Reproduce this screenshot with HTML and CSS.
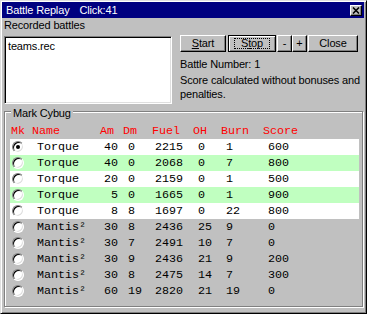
FILE: index.html
```html
<!DOCTYPE html>
<html>
<head>
  <meta charset="utf-8">
  <title>Battle Replay</title>
  <link rel="stylesheet" href="styles.css">
</head>
<body>
  <div class="window">
    <div class="titlebar">
      <span class="title">Battle Replay</span>
      <span class="title clicks">Click:41</span>
      <span class="close-btn">
        <svg width="8" height="7" viewBox="0 0 8 7">
          <path d="M1 0.5 L7 6.5 M7 0.5 L1 6.5" stroke="#000" stroke-width="1.6"/>
        </svg>
      </span>
    </div>

    <div class="content">
      <div class="caption">Recorded battles</div>

      <div class="top-pane">
        <div class="listbox">
          <div class="item">teams.rec</div>
        </div>
        <div class="controls">
          <div class="buttons">
            <button class="btn start"><u>S</u>tart</button>
            <button class="btn stop"><span class="focus">S<u>t</u>op</span></button>
            <button class="btn small">-</button>
            <button class="btn small">+</button>
            <button class="btn close">Close</button>
          </div>
          <p class="info">Battle Number: 1</p>
          <p class="info score-note">Score calculated without bonuses and penalties.</p>
        </div>
      </div>

      <div class="group">
        <span class="group-label">Mark Cybug</span>
        <div class="grid">
          <div class="row hdr">
            <span class="c-mk">Mk</span><span>Name</span><span>Am</span><span>Dm</span><span>Fuel</span><span>OH</span><span>Burn</span><span>Score</span>
          </div>
          <div class="row white">
            <span class="c-mk"><i class="radio checked"></i></span><span class="c-name">Torque</span><span class="c-am">40</span><span class="c-dm">0</span><span class="c-fuel">2215</span><span class="c-oh">0</span><span class="c-burn">1</span><span class="c-score">600</span>
          </div>
          <div class="row green">
            <span class="c-mk"><i class="radio"></i></span><span class="c-name">Torque</span><span class="c-am">40</span><span class="c-dm">0</span><span class="c-fuel">2068</span><span class="c-oh">0</span><span class="c-burn">7</span><span class="c-score">800</span>
          </div>
          <div class="row white">
            <span class="c-mk"><i class="radio"></i></span><span class="c-name">Torque</span><span class="c-am">20</span><span class="c-dm">0</span><span class="c-fuel">2159</span><span class="c-oh">0</span><span class="c-burn">1</span><span class="c-score">500</span>
          </div>
          <div class="row green">
            <span class="c-mk"><i class="radio"></i></span><span class="c-name">Torque</span><span class="c-am">5</span><span class="c-dm">0</span><span class="c-fuel">1665</span><span class="c-oh">0</span><span class="c-burn">1</span><span class="c-score">900</span>
          </div>
          <div class="row white">
            <span class="c-mk"><i class="radio"></i></span><span class="c-name">Torque</span><span class="c-am">8</span><span class="c-dm">8</span><span class="c-fuel">1697</span><span class="c-oh">0</span><span class="c-burn">22</span><span class="c-score">800</span>
          </div>
          <div class="row">
            <span class="c-mk"><i class="radio"></i></span><span class="c-name">Mantis²</span><span class="c-am">30</span><span class="c-dm">8</span><span class="c-fuel">2436</span><span class="c-oh">25</span><span class="c-burn">9</span><span class="c-score">0</span>
          </div>
          <div class="row">
            <span class="c-mk"><i class="radio"></i></span><span class="c-name">Mantis²</span><span class="c-am">30</span><span class="c-dm">7</span><span class="c-fuel">2491</span><span class="c-oh">10</span><span class="c-burn">7</span><span class="c-score">0</span>
          </div>
          <div class="row">
            <span class="c-mk"><i class="radio"></i></span><span class="c-name">Mantis²</span><span class="c-am">30</span><span class="c-dm">9</span><span class="c-fuel">2436</span><span class="c-oh">21</span><span class="c-burn">9</span><span class="c-score">200</span>
          </div>
          <div class="row">
            <span class="c-mk"><i class="radio"></i></span><span class="c-name">Mantis²</span><span class="c-am">30</span><span class="c-dm">8</span><span class="c-fuel">2475</span><span class="c-oh">14</span><span class="c-burn">7</span><span class="c-score">300</span>
          </div>
          <div class="row">
            <span class="c-mk"><i class="radio"></i></span><span class="c-name">Mantis²</span><span class="c-am">60</span><span class="c-dm">19</span><span class="c-fuel">2820</span><span class="c-oh">21</span><span class="c-burn">19</span><span class="c-score">0</span>
          </div>
        </div>
      </div>
    </div>
  </div>
</body>
</html>
```

FILE: styles.css
```css
html, body {
  margin: 0;
  padding: 0;
  background-color: #c0c0c0;
}

body {
  font-family: 'Liberation Sans', Arial, sans-serif;
  font-size: 11px;
  letter-spacing: -0.15px;
  color: #000;
}

.window {
  box-sizing: border-box;
  width: 367px;
  height: 314px;
  border: 1px solid;
  border-color: #dfdfdf #000 #000 #dfdfdf;
  box-shadow: inset 1px 1px 0 #fff, inset -1px -1px 0 #808080;
  padding: 1px 2px 1px 1px;
  background-color: #c0c0c0;
}

/* title bar */
.titlebar {
  display: flex;
  align-items: center;
  height: 16px;
  background-color: #000080;
  color: #fff;
  padding-left: 4px;
}

.title {
  line-height: 16px;
}

.clicks {
  margin-left: 10px;
}

.close-btn {
  margin-left: auto;
  margin-right: 2px;
  box-sizing: border-box;
  width: 12px;
  height: 11px;
  display: flex;
  align-items: center;
  justify-content: center;
  background-color: #c0c0c0;
  border: 1px solid;
  border-color: #fff #000 #000 #fff;
  box-shadow: inset -1px -1px 0 #808080;
}

.close-btn svg {
  display: block;
}

/* main area */
.content {
  padding-left: 2px;
}

.caption {
  line-height: 14px;
  height: 14px;
}

.top-pane {
  display: flex;
  margin-top: 3px;
}

.listbox {
  box-sizing: border-box;
  width: 168px;
  height: 68px;
  margin-top: 1px;
  background-color: #fff;
  border: 1px solid;
  border-color: #808080 #fff #fff #808080;
  box-shadow: inset 1px 1px 0 #000, inset -1px -1px 0 #dfdfdf;
  padding: 3px 3px;
}

.listbox .item {
  line-height: 13px;
}

.controls {
  margin-left: 8px;
  width: 182px;
}

.buttons {
  display: flex;
}

.btn {
  box-sizing: border-box;
  height: 17px;
  padding: 0;
  margin: 0;
  font-family: inherit;
  font-size: 11px;
  letter-spacing: -0.15px;
  color: #000;
  background-color: #c0c0c0;
  border: 1px solid;
  border-color: #fff #000 #000 #fff;
  box-shadow: inset -1px -1px 0 #808080;
  line-height: 13px;
}

.btn.start {
  width: 46px;
}

.btn.stop {
  width: 48px;
  margin-left: 2px;
  border-color: #000;
  box-shadow: inset 1px 1px 0 #fff, inset -1px -1px 0 #808080;
  display: flex;
  align-items: center;
  justify-content: center;
}

.btn.stop .focus {
  display: block;
  box-sizing: border-box;
  width: 36px;
  height: 11px;
  line-height: 9px;
  border: 1px dotted #000;
}

.btn.small {
  width: 15px;
}

.btn.small:first-of-type {
  margin-left: 1px;
}

.btn.stop + .btn.small {
  margin-left: 1px;
}

.btn.close {
  width: 50px;
  margin-left: 1px;
}

.info {
  margin: 0;
  line-height: 14px;
}

.buttons + .info {
  margin-top: 5px;
}

.score-note {
  margin-top: 2px;
}

/* group box */
.group {
  position: relative;
  box-sizing: border-box;
  width: 359px;
  height: 196px;
  margin-top: 7px;
  border: 1px solid #808080;
  box-shadow: inset 1px 1px 0 #fff, 1px 1px 0 #fff;
  padding: 11px 3px 0 5px;
}

.group-label {
  position: absolute;
  top: -5px;
  left: 6px;
  padding: 0 2px;
  line-height: 13px;
  background-color: #c0c0c0;
}

.row {
  display: grid;
  grid-template-columns: 22px 68px 23px 29px 41px 28px 42px 1fr;
  height: 16px;
  line-height: 16px;
  font-family: 'Liberation Mono', 'Courier New', monospace;
  font-size: 11.7px;
  letter-spacing: 0;
  white-space: pre;
}

.row.hdr {
  color: #f00;
}

.row.hdr .c-mk {
  padding-left: 1px;
}

.row.white {
  background-color: #fff;
}

.row.green {
  background-color: #c0ffc0;
}

.c-mk {
  display: flex;
  align-items: center;
}

.c-name,
.c-dm,
.c-oh,
.c-burn,
.c-score {
  padding-left: 5px;
}

.c-fuel {
  padding-left: 3px;
}

.c-am {
  text-align: right;
  padding-right: 5px;
}

.radio {
  position: relative;
  display: block;
  box-sizing: border-box;
  width: 12px;
  height: 12px;
  margin-left: 2px;
  border-radius: 50%;
  background-color: #fff;
  border: 1px solid;
  border-color: #808080 #fff #fff #808080;
  box-shadow: inset 1px 1px 0 #000, inset -1px -1px 0 #dfdfdf;
}

.radio.checked::after {
  content: '';
  position: absolute;
  left: 3px;
  top: 3px;
  width: 4px;
  height: 4px;
  border-radius: 50%;
  background-color: #000;
}
```
